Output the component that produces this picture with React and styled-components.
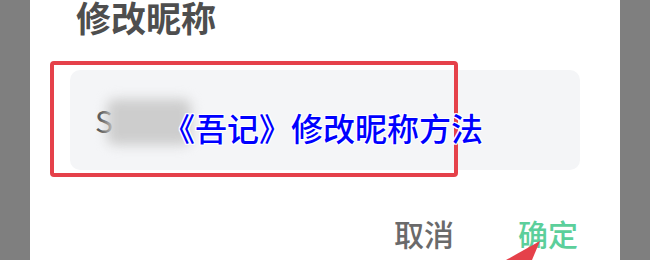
import React from "react";
import styled, { createGlobalStyle } from "styled-components";

const Global = createGlobalStyle`
  html, body { margin: 0; padding: 0; background: #ffffff; }
  body { width: 650px; height: 260px; overflow: hidden; font-family: "Noto Sans CJK SC", "Noto Sans", sans-serif; }
  #root { width: 650px; height: 260px; }
`;

const Screen = styled.div`
  display: flex;
  width: 650px;
  height: 260px;
  position: relative;
  overflow: hidden;
`;

const Side = styled.div`
  width: 30px;
  flex: none;
  background: #7f7f7f;
`;

const Panel = styled.div`
  flex: 1;
  background: #ffffff;
  display: flex;
  flex-direction: column;
  padding: 0 40px 0 40px;
`;

const Title = styled.h1`
  margin: 0;
  padding-left: 6px;
  font-size: 35px;
  line-height: 34px;
  height: 34px;
  font-weight: 700;
  color: #4e4e4e;
`;

const FieldWrap = styled.div`
  position: relative;
  margin-top: 36px;
`;

const Field = styled.div`
  height: 100px;
  background: #f4f5f7;
  border-radius: 10px;
  display: flex;
  align-items: center;
  padding-left: 25px;
  font-size: 30px;
  color: #555;
`;

const Blurred = styled.span`
  display: inline-block;
  width: 84px;
  height: 46px;
  margin-left: -6px;
  margin-top: 4px;
  background: #cdcdcd;
  border-radius: 8px;
  filter: blur(6px);
`;

const Highlight = styled.div`
  position: absolute;
  left: -20px;
  top: -9px;
  width: 408px;
  height: 116px;
  box-sizing: border-box;
  border: 4px solid #e5414a;
  border-radius: 4px;
  pointer-events: none;
`;

const Caption = styled.div`
  position: absolute;
  left: 93px;
  top: 40px;
  font-size: 32px;
  line-height: 34px;
  font-weight: 500;
  color: #0000ff;
  white-space: nowrap;
  text-shadow: 1px 1px 0 #fff, -1px -1px 0 #fff, 1px -1px 0 #fff, -1px 1px 0 #fff, 0 1px 0 #fff, 0 -1px 0 #fff, 1px 0 0 #fff, -1px 0 0 #fff;
`;

const Actions = styled.div`
  display: flex;
  justify-content: flex-end;
  gap: 64px;
  margin-top: 46px;
  padding-right: 2px;
`;

const Action = styled.span`
  font-size: 30px;
  line-height: 34px;
  font-weight: 500;
  color: ${(p) => (p.$primary ? "#5ccf9b" : "#6a6a6a")};
`;

const Arrow = styled.svg`
  position: absolute;
  left: 490px;
  top: 236px;
  width: 60px;
  height: 24px;
`;

export default function App() {
  return (
    <>
      <Global />
      <Screen>
        <Side />
        <Panel>
          <Title>修改昵称</Title>
          <FieldWrap>
            <Field>
              S<Blurred />
            </Field>
            <Highlight />
            <Caption>《吾记》修改昵称方法</Caption>
          </FieldWrap>
          <Actions>
            <Action>取消</Action>
            <Action $primary>确定</Action>
          </Actions>
        </Panel>
        <Side />
        <Arrow viewBox="0 0 60 24">
          <polygon points="50,5 16,24 42,24" fill="#e5414a" />
        </Arrow>
      </Screen>
    </>
  );
}
